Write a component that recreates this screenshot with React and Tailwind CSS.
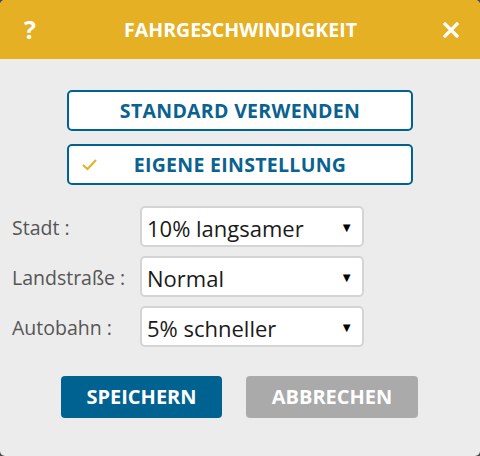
import React, { useState } from "react";

const optionen = ["20% langsamer", "10% langsamer", "5% langsamer", "Normal", "5% schneller", "10% schneller"];

const Auswahl = ({ label, value, onChange }) => (
    <div className="flex items-center h-[41px]">
        <span className="w-[128px] pt-[3px] text-[19.5px] text-[#555555]">{label}</span>
        <div className="relative w-[224px] h-[41px] bg-white border-2 border-[#d4d4d4] rounded-[5px]">
            <select
                value={value}
                onChange={(e) => onChange(e.target.value)}
                className="appearance-none w-full h-full bg-transparent pl-[5px] pt-[3px] text-[22px] text-[#1a1a1a] outline-none"
            >
                {optionen.map((o) => (
                    <option key={o}>{o}</option>
                ))}
            </select>
            <span className="absolute right-[9px] top-[10px] text-[13px] text-black pointer-events-none">▼</span>
        </div>
    </div>
);

const Haken = () => (
    <svg className="absolute left-[12px] top-[12px]" width="17" height="14" viewBox="0 0 17 14">
        <path d="M2 7 L6.5 11 L15 2" fill="none" stroke="#e5b023" strokeWidth="2" />
    </svg>
);

const App = () => {
    const [modus, setModus] = useState("eigene");
    const [stadt, setStadt] = useState("10% langsamer");
    const [land, setLand] = useState("Normal");
    const [autobahn, setAutobahn] = useState("5% schneller");

    return (
        <div className="w-[480px] h-[456px] bg-[#4a4a4a] font-['Open_Sans',sans-serif]">
            <div className="w-full h-full bg-[#ececec] rounded-[5px] overflow-hidden flex flex-col">
                {/* Kopfzeile */}
                <div className="h-[59px] bg-[#e5b023] flex items-center justify-between px-[22px] text-white shrink-0">
                    <span className="text-[25px] font-bold w-[16px] text-center leading-none">?</span>
                    <span className="text-[19.5px] font-bold">FAHRGESCHWINDIGKEIT</span>
                    <svg width="16" height="16" viewBox="0 0 16 16" className="mr-[-1px]">
                        <path d="M2 2 L14 14 M14 2 L2 14" stroke="white" strokeWidth="3.2" strokeLinecap="square" />
                    </svg>
                </div>

                <div className="flex flex-col items-center pt-[31px]">
                    <button
                        onClick={() => setModus("standard")}
                        className="relative w-[346px] h-[41px] bg-white border-2 border-[#006290] rounded-[5px] text-[19.5px] font-bold text-[#0a6290] tracking-[0.3px]"
                    >
                        {modus === "standard" && <Haken />}
                        STANDARD VERWENDEN
                    </button>
                    <button
                        onClick={() => setModus("eigene")}
                        className="relative mt-[13px] w-[346px] h-[41px] bg-white border-2 border-[#006290] rounded-[5px] text-[19.5px] font-bold text-[#0a6290] tracking-[0.3px]"
                    >
                        {modus === "eigene" && <Haken />}
                        EIGENE EINSTELLUNG
                    </button>
                </div>

                <div className="flex flex-col gap-[9px] pl-[12px] mt-[21px]">
                    <Auswahl label="Stadt :" value={stadt} onChange={setStadt} />
                    <Auswahl label="Landstraße :" value={land} onChange={setLand} />
                    <Auswahl label="Autobahn :" value={autobahn} onChange={setAutobahn} />
                </div>

                <div className="flex pl-[61px] gap-[24px] mt-[29px]">
                    <button className="w-[161px] h-[42px] bg-[#006290] rounded-[4px] text-white text-[20px] font-bold">
                        SPEICHERN
                    </button>
                    <button className="w-[172px] h-[42px] bg-[#aaaaaa] rounded-[4px] text-white text-[20px] font-bold">
                        ABBRECHEN
                    </button>
                </div>
            </div>
        </div>
    );
};

export default App;
